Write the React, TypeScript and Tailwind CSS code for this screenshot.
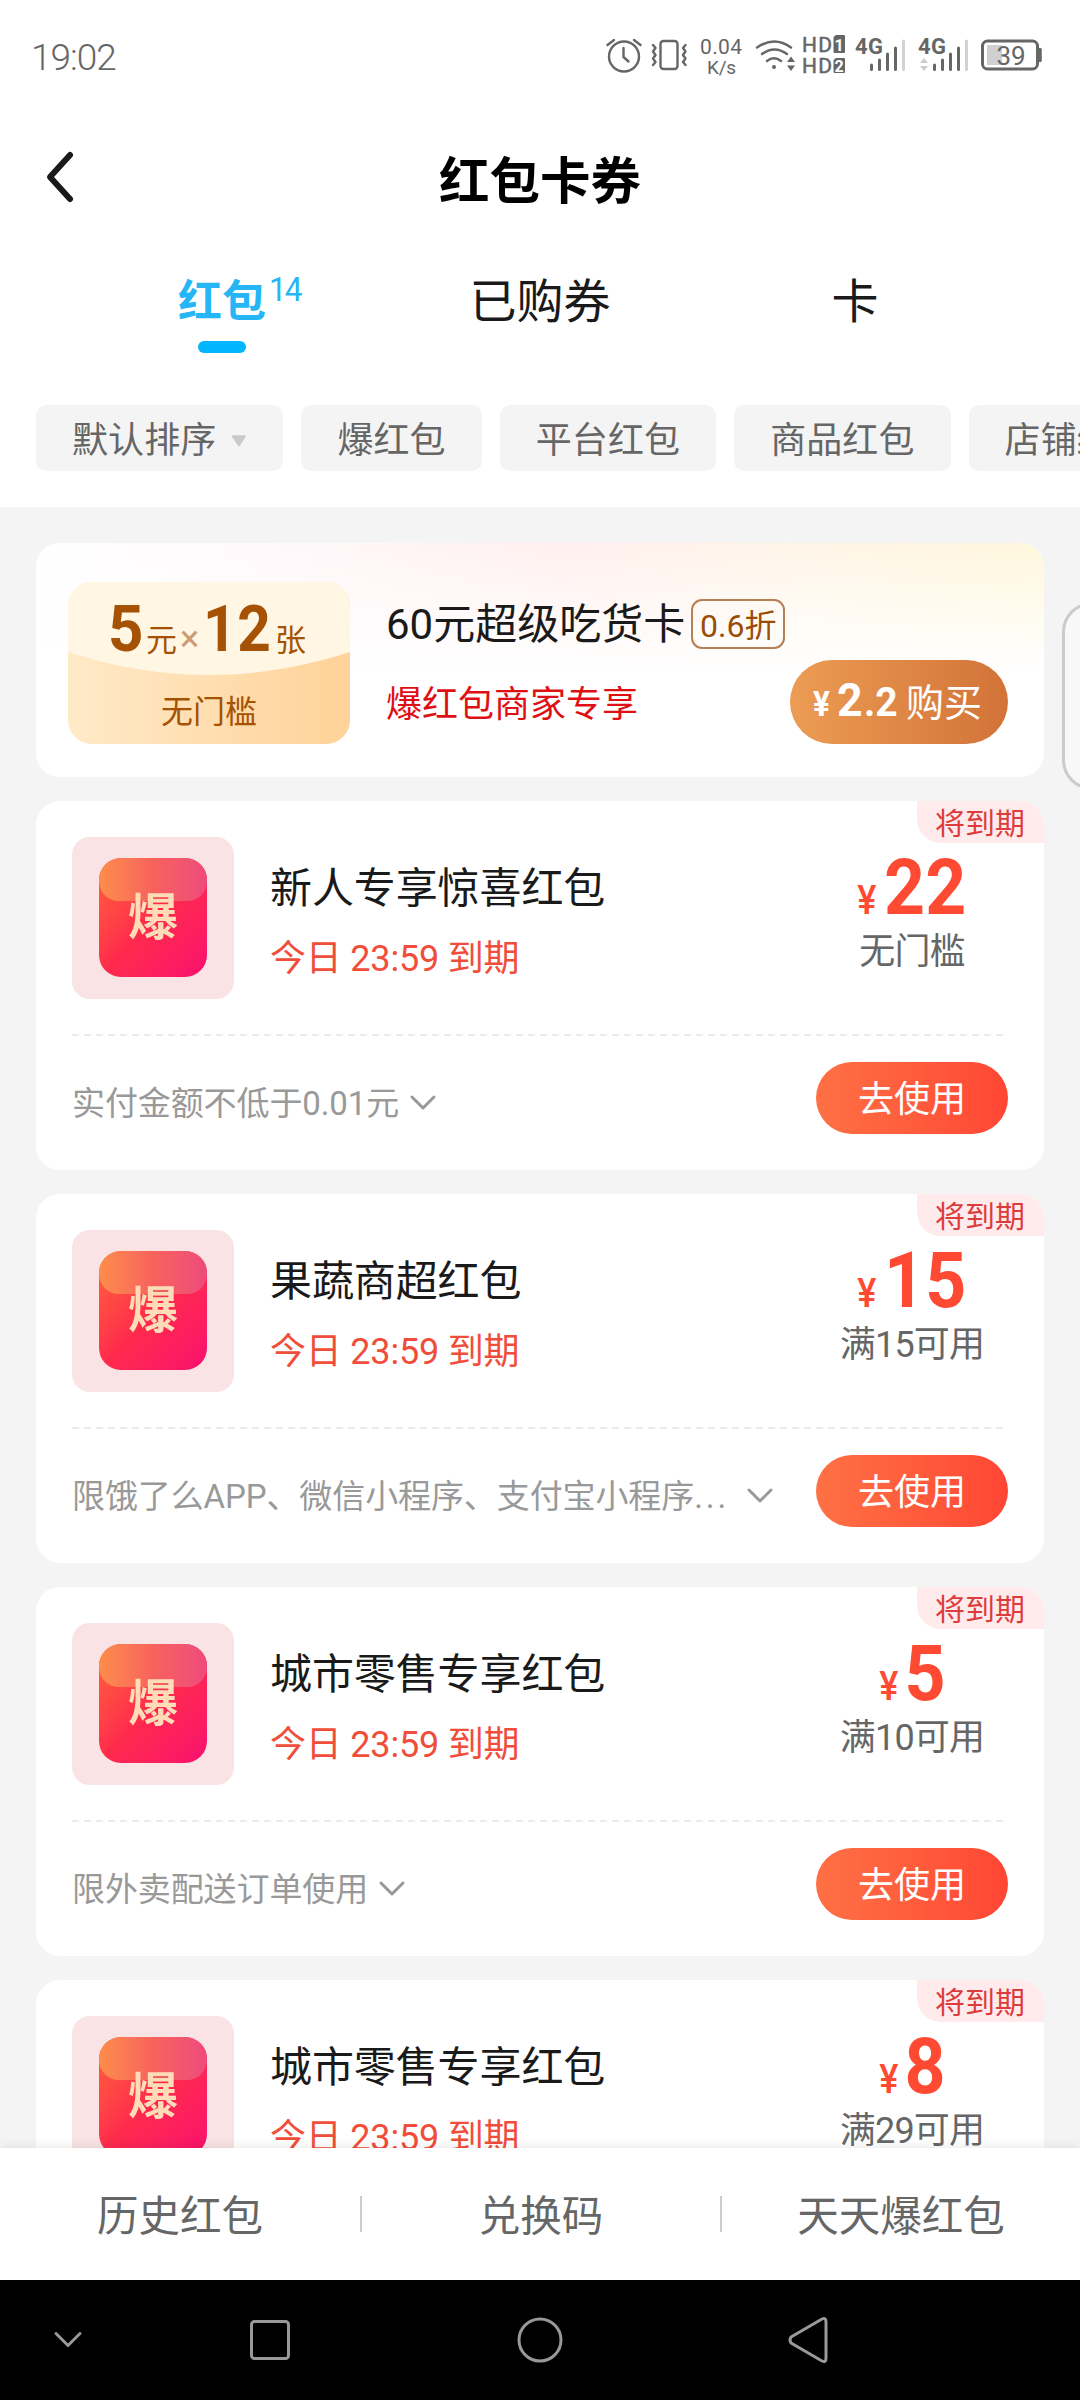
import React from 'react';

interface Coupon {
  title: string;
  amount: string;
  threshold: string;
  condition: string;
  truncated?: boolean;
}

const coupons: Coupon[] = [
  { title: '新人专享惊喜红包', amount: '22', threshold: '无门槛', condition: '实付金额不低于0.01元' },
  { title: '果蔬商超红包', amount: '15', threshold: '满15可用', condition: '限饿了么APP、微信小程序、支付宝小程序', truncated: true },
  { title: '城市零售专享红包', amount: '5', threshold: '满10可用', condition: '限外卖配送订单使用' },
  { title: '城市零售专享红包', amount: '8', threshold: '满29可用', condition: '限外卖配送订单使用' },
];

const StatusIcons: React.FC = () => (
  <svg width="450" height="56" viewBox="600 30 450 56" fill="none" stroke="#666" strokeWidth="2.4" strokeLinecap="round" strokeLinejoin="round">
    {/* alarm */}
    <circle cx="624" cy="56.5" r="15" />
    <path d="M623.5 48v9l5 4.500M607.500 45l6.500-5M640.500 45l-6.500-5" />
    {/* vibrate */}
    <rect x="660.500" y="41" width="17" height="28" rx="3" />
    <path d="M653 45l2.500 3-2.500 3.500 2.500 3.500-2.500 3.500 2.500 3.500-2.500 3M685.500 45l-2.500 3 2.500 3.500-2.500 3.500 2.500 3.500-2.500 3.500 2.500 3" />
    {/* network speed */}
    <g fill="#666" stroke="none" fontFamily="Roboto, sans-serif">
      <text x="700" y="53.500" fontSize="21" textLength="42">0.04</text>
      <text x="707" y="73.500" fontSize="19" textLength="29">K/s</text>
    </g>
    {/* wifi */}
    <path d="M757 47.500q17.500-12 34 0M762 54q12.500-9 25 0M767 61q7-5.500 14 0" />
    <circle cx="774" cy="67" r="2" fill="#666" stroke="none" />
    <path d="M787 62l4-5.500 4 5.500zM787 65.500l4 5.500 4-5.500z" fill="#666" stroke="none" />
    {/* HD badges */}
    <path d="M836 35.500h8.500v17h-10.500v-15zM836 58.500h8.500v14h-10.500v-12z" fill="#666" stroke="#666" strokeWidth="1" />
    <g fill="#666" stroke="none" fontFamily="Roboto, sans-serif" fontSize="20">
      <text x="802" y="52" fontSize="21" textLength="30" stroke="#666" strokeWidth="0.5">HD</text>
      <text x="802" y="73" fontSize="21" textLength="30" stroke="#666" strokeWidth="0.5">HD</text>
      <text x="834.500" y="50.500" fontSize="16" fontWeight="700" fill="#fff">1</text>
      <text x="834.500" y="71.500" fontSize="16" fontWeight="700" fill="#fff">2</text>
      <text x="855" y="53.500" fontSize="22" fontWeight="700" textLength="28">4G</text>
      <text x="918" y="53.500" fontSize="22" fontWeight="700" textLength="28">4G</text>
    </g>
    {/* signal bars */}
    <g strokeWidth="3">
      <path d="M871.500 65v4.500M879.500 60v9.500M887.500 54v15.500M895.500 48v21.500" />
      <path d="M934.500 65v4.500M942.500 60v9.500M950.500 54v15.500M958.500 48v21.500" />
      <path d="M903.500 41v28.500M966.500 41v28.500" stroke="#d2d2d2" />
    </g>
    <path d="M920 63l4-5 4 5zM920 66l4 5 4-5z" fill="#ccc" stroke="none" />
    {/* battery */}
    <rect x="987" y="45" width="15" height="20" fill="#d0d0d0" stroke="none" />
    <rect x="982.500" y="41" width="55" height="28" rx="5" strokeWidth="3" />
    <path d="M1040 49.500v11" strokeWidth="3.500" />
    <text x="996.500" y="64.500" fontSize="26" textLength="29" fill="#666" stroke="none" fontFamily="Roboto, sans-serif">39</text>
  </svg>
);

const Chip: React.FC<{ children: React.ReactNode }> = ({ children }) => (
  <div className="flex h-[66px] flex-none items-center rounded-[10px] bg-[#f4f4f4] px-9 pt-[5px] text-[36px] tracking-[0.1px] text-[#666]">
    {children}
  </div>
);

const Banner: React.FC = () => (
  <div className="h-[234px] flex-none rounded-3xl bg-white">
    <div className="flex h-full rounded-3xl bg-[linear-gradient(to_bottom,rgba(255,255,255,0)_0%,#fff_55%),linear-gradient(to_right,#fff_0%,#fff8fa_25%,#fff0ef_52%,#fff5e8_75%,#fff7dc_100%)] pl-8 pr-9">
      <div className="relative mt-[39px] h-[162px] w-[282px] flex-none overflow-hidden rounded-3xl bg-linear-to-r from-[#ffeac8] to-[#ffd298]">
        <svg className="absolute left-0 top-0" width="282" height="162" viewBox="0 0 282 162">
          <path d="M0 0h282v70Q141 116 0 70z" fill="#fff6e4" />
        </svg>
        <div className="relative flex h-[86px] items-baseline pl-[40px] pt-[11px] leading-[72px] text-[#a55204]">
          <span className="w-[38px] origin-left scale-x-95 text-[65px] font-bold">5</span>
          <span className="w-[31px] text-[31px]">元</span>
          <span className="w-[25px] text-center text-[36px] leading-none text-[#cd9c75]">×</span>
          <span className="w-[73px] origin-left scale-x-90 pl-[1px] text-[65px] font-bold tracking-[1px]">12</span>
          <span className="text-[31px]">张</span>
        </div>
        <div className="relative mt-[22px] text-center text-[32px] leading-[44px] text-[#a55204]">无门槛</div>
      </div>
      <div className="ml-9 mt-[54px]">
        <div className="flex h-[54px] items-center">
          <span className="whitespace-nowrap text-[42px] text-[#1a1a1a]">60元超级吃货卡</span>
          <span className="ml-[6px] flex h-[50px] w-[94px] flex-none items-center justify-center rounded-[11px] border-2 border-[#b58055] pt-[3px] text-[32px] text-[#9a4d08]">0.6折</span>
        </div>
        <div className="mt-[27px] text-[36px] leading-[54px] text-[#df1014]">爆红包商家专享</div>
      </div>
      <div className="ml-auto mt-[117px] flex h-[84px] w-[218px] flex-none items-baseline rounded-full bg-linear-to-r from-[#ec9c54] to-[#d27338] pl-[23px] leading-[80px] text-white">
        <span className="w-[24px] origin-left scale-x-90 text-[35px] font-bold">¥</span>
        <span className="w-[27px] origin-left scale-x-95 text-[47px] font-bold">2</span>
        <span className="w-[42px] origin-left scale-x-95 text-[41px] font-bold">.2</span>
        <span className="text-[38px]">购买</span>
      </div>
    </div>
  </div>
);

const PacketIcon: React.FC = () => (
  <div className="flex h-[162px] w-[162px] flex-none items-center justify-center rounded-[18px] bg-[#f9e3e4] pb-[2px]">
    <div className="relative flex h-[119px] w-[108px] items-center justify-center overflow-hidden rounded-[22px] bg-linear-to-br from-[#ff6038] via-[#ff2a4c] to-[#f90c6e]">
      <div className="absolute left-0 top-0 h-[43px] w-full rounded-b-[20px] bg-linear-to-r from-[#fd8d4a] via-[#f7625c] to-[#ee4a7c]" />
      <span className="relative pt-[2px] text-[50px] font-bold leading-none text-[#ffdcb8]">爆</span>
    </div>
  </div>
);

const CouponCard: React.FC<{ coupon: Coupon }> = ({ coupon }) => (
  <div className="relative h-[369px] flex-none rounded-3xl bg-white px-9 pt-9">
    <div className="absolute right-0 top-0 h-[42px] w-[127px] rounded-bl-3xl rounded-tr-3xl bg-[#ffebeb] pl-[18px] text-[30px] leading-[45px] text-[#dd3c3c]">
      将到期
    </div>
    <div className="flex h-[162px]">
      <PacketIcon />
      <div className="ml-9 flex-1 pt-[22px]">
        <div className="text-[42px] leading-[60px] tracking-[-0.1px] text-[#1a1a1a]">{coupon.title}</div>
        <div className="mt-[13px] text-[36px] leading-[54px] tracking-[-0.2px] text-[#f04e3a]">今日 23:59 到期</div>
      </div>
      <div className="w-[192px] text-center">
        <div className="flex h-[92px] items-baseline justify-center leading-[103px] text-[#ff4a33]">
          <span className="origin-right scale-x-90 text-[40px] font-medium">¥</span>
          <span className="ml-[5px] scale-x-[0.93] text-[77px] font-bold">{coupon.amount}</span>
        </div>
        <div className="text-[36px] leading-[46px] tracking-[-0.8px] text-[#666]">{coupon.threshold}</div>
      </div>
    </div>
    <div className="mt-[35px] h-[2px] w-[932px] bg-[repeating-linear-gradient(to_right,#ebebeb_0,#ebebeb_7px,transparent_7px,transparent_12px)]" />
    <div className="mt-[26px] flex h-[72px] items-center">
      <span className="whitespace-nowrap pt-[12px] text-[33px] leading-[50px] tracking-[-0.1px] text-[#999]">
        {coupon.condition}
        {coupon.truncated && <span className="pr-[7px] tracking-[3px]">...</span>}
      </span>
      <svg className="ml-[9px] mt-[10px] flex-none" width="30" height="20" viewBox="0 0 30 20" fill="none" stroke="#999" strokeWidth="3" strokeLinecap="round" strokeLinejoin="round">
        <path d="M4 4l11 11L26 4" />
      </svg>
      <div className="ml-auto h-[72px] w-[192px] flex-none rounded-full bg-linear-to-r from-[#ff7044] to-[#ff4534] text-center text-[36px] leading-[76px] text-white">
        去使用
      </div>
    </div>
  </div>
);

const App: React.FC = () => {
  return (
    <div className="relative flex h-[2400px] w-[1080px] flex-col overflow-hidden bg-[#f4f4f4] font-['Roboto','Noto_Sans_CJK_SC',sans-serif]">
      <header className="h-[507px] flex-none bg-white">
        <div className="flex h-[116px] items-start justify-between pl-[31px] pr-[30px] pt-[30px] text-[#666]">
          <span className="text-[37px] font-light leading-[56px] tracking-[-1px]">19:02</span>
          <StatusIcons />
        </div>
        <div className="flex h-[126px] items-center px-[42px]">
          <svg width="36" height="60" viewBox="0 0 36 60" fill="none" stroke="#1a1a1a" strokeWidth="6" strokeLinecap="round" strokeLinejoin="round">
            <path d="M28 6L8 28l20 22" />
          </svg>
          <h1 className="flex-1 pr-9 pt-[5px] text-center text-[50.5px] font-bold leading-[72px] text-black">红包卡券</h1>
        </div>
        <nav className="flex h-[163px] px-[63px] text-[47px] leading-[68px] text-[#1a1a1a]">
          <div className="flex w-[318px] flex-col items-center pt-[26px]">
            <div className="relative text-[44px] font-bold text-[#27b6f5]">
              红包
              <span className="absolute left-[91px] top-[-12px] origin-left scale-x-95 text-[33px] font-normal tracking-[-2px]">14</span>
            </div>
            <div className="mt-[5px] h-3 w-12 rounded-full bg-[#02b6fd]" />
          </div>
          <div className="w-[318px] pt-[26px] text-center">已购券</div>
          <div className="w-[312px] pt-[26px] text-center">卡</div>
        </nav>
        <div className="flex gap-[18px] overflow-hidden pl-9">
          <Chip>
            默认排序
            <svg className="ml-[15px]" width="16" height="14" viewBox="0 0 17 14">
              <path d="M2 1h13q1.500 0 .5 1.500L9.500 12q-1 1.500-2 0L1 2.500Q0 1 2 1z" fill="#c6cac9" />
            </svg>
          </Chip>
          <Chip>爆红包</Chip>
          <Chip>平台红包</Chip>
          <Chip>商品红包</Chip>
          <Chip>店铺红包</Chip>
        </div>
      </header>

      <main className="flex h-[1641px] flex-none flex-col gap-6 overflow-hidden px-9 pt-9">
        <Banner />
        {coupons.map((coupon, i) => (
          <CouponCard key={i} coupon={coupon} />
        ))}
      </main>

      <div className="absolute left-[1062px] top-[602px] h-[188px] w-[60px] rounded-[30px] border-[3px] border-[#cbcbcb] bg-[#f8f8f8]" />

      <footer className="relative flex h-[132px] flex-none items-center bg-white text-[41.5px] text-[#666] shadow-[0_-2px_10px_rgba(0,0,0,0.08)]">
        <div className="w-[360px] pt-[6px] text-center">历史红包</div>
        <div className="h-9 w-[2px] bg-[#ccc]" />
        <div className="w-[358px] pt-[6px] text-center">兑换码</div>
        <div className="h-9 w-[2px] bg-[#ccc]" />
        <div className="w-[358px] pt-[6px] text-center">天天爆红包</div>
      </footer>

      <div className="h-[120px] flex-none bg-black">
        <svg width="1080" height="120" viewBox="0 0 1080 120" fill="none" stroke="#999" strokeWidth="3" strokeLinejoin="round" strokeLinecap="round">
          <path d="M56 53.500l12 12 12-12" />
          <rect x="251.500" y="41.500" width="37" height="37" rx="3" />
          <circle cx="540" cy="60" r="21" />
          <path d="M791 57L822 39q4-2 4 3v36q0 5-4 3L791 63q-2-3 0-6z" />
        </svg>
      </div>
    </div>
  );
};

export default App;
